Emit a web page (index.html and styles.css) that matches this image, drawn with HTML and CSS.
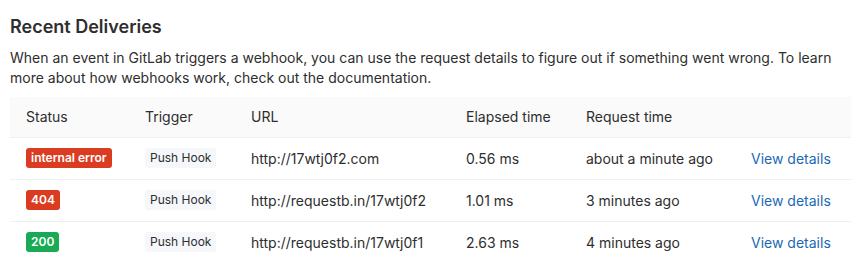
FILE: index.html
```html
<!DOCTYPE html>
<html>
<head>
<meta charset="utf-8">
<link rel="stylesheet" href="styles.css">
</head>
<body>
<div class="page">
  <h4 class="title">Recent Deliveries</h4>
  <p class="desc">When an event in GitLab triggers a webhook, you can use the request details to figure out if something went wrong. To learn more about how webhooks work, check out the documentation.</p>
  <table class="deliveries">
    <colgroup>
      <col class="c-status"><col class="c-trigger"><col class="c-url"><col class="c-elapsed"><col class="c-req"><col class="c-link">
    </colgroup>
    <thead>
      <tr><th>Status</th><th>Trigger</th><th>URL</th><th>Elapsed time</th><th>Request time</th><th></th></tr>
    </thead>
    <tbody>
      <tr>
        <td><span class="badge badge-danger">internal error</span></td>
        <td><span class="chip">Push Hook</span></td>
        <td>http://17wtj0f2.com</td>
        <td>0.56 ms</td>
        <td>about a minute ago</td>
        <td><a class="link" href="#">View details</a></td>
      </tr>
      <tr>
        <td><span class="badge badge-danger">404</span></td>
        <td><span class="chip">Push Hook</span></td>
        <td>http://requestb.in/17wtj0f2</td>
        <td>1.01 ms</td>
        <td>3 minutes ago</td>
        <td><a class="link" href="#">View details</a></td>
      </tr>
      <tr>
        <td><span class="badge badge-success">200</span></td>
        <td><span class="chip">Push Hook</span></td>
        <td>http://requestb.in/17wtj0f1</td>
        <td>2.63 ms</td>
        <td>4 minutes ago</td>
        <td><a class="link" href="#">View details</a></td>
      </tr>
    </tbody>
  </table>
</div>
</body>
</html>
```
FILE: styles.css
```css
* { box-sizing: border-box; }
body {
  margin: 0;
  background: #fff;
  color: #2e2e2e;
  font-family: Inter, "Open Sans", sans-serif;
  font-size: 14px;
}
.page {
  padding: 16px 10px 0 10px;
}
.title {
  margin: 0 0 10px 0;
  font-size: 18px;
  font-weight: 600;
  line-height: 22px;
  color: #2e2e2e;
}
.desc {
  margin: 0 0 9px 0;
  line-height: 20px;
}
.deliveries {
  width: 841px;
  border-collapse: collapse;
  table-layout: fixed;
}
.c-status { width: 119px; }
.c-trigger { width: 106px; }
.c-url { width: 215px; }
.c-elapsed { width: 120px; }
.c-req { width: 165px; }
.c-link { width: 116px; }
.deliveries th {
  background: #fafafa;
  text-align: left;
  font-weight: 400;
  height: 40px;
  padding: 0 0 0 16px;
  border-bottom: 1px solid #f0f0f0;
}
.deliveries td {
  height: 42px;
  padding: 0 0 0 16px;
  border-bottom: 1px solid #f0f0f0;
  white-space: nowrap;
}
.deliveries tbody tr:last-child td { border-bottom: none; }
.badge {
  display: inline-block;
  height: 20px;
  line-height: 20px;
  padding: 0 5px;
  border-radius: 3px;
  color: #fff;
  font-size: 12px;
  font-weight: 600;
}
.badge-danger { background: #db3b21; }
.badge-success { background: #1aaa55; }
.chip {
  display: inline-block;
  height: 20px;
  line-height: 20px;
  padding: 0 5px;
  border-radius: 3px;
  background: #f5f7fb;
  font-size: 12px;
  color: #2e2e2e;
}
.link {
  color: #1b69b6;
  text-decoration: none;
}
```
